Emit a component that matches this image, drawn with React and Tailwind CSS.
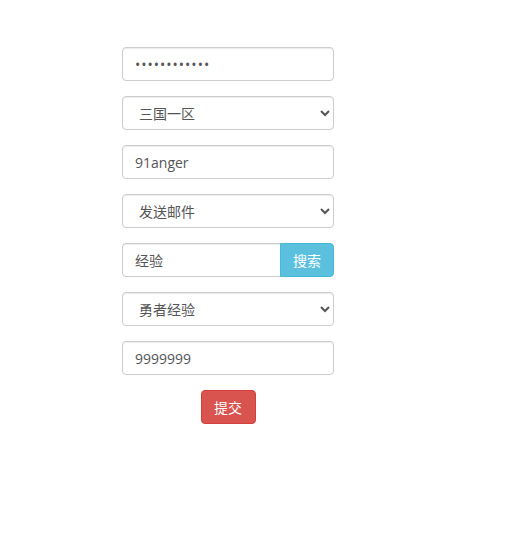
import React from "react";

const fontCls = "font-['Open_Sans','Noto_Sans_CJK_SC',sans-serif]";

const inputCls =
  "block w-[212px] h-[34px] px-[12px] py-[6px] text-[14px] text-[#555] bg-white border border-[#ccc] rounded-[4px] shadow-[inset_0_1px_1px_rgba(0,0,0,0.075)] outline-none " +
  fontCls;

function Sel({ value }) {
  return (
    <select defaultValue={value} className={inputCls}>
      <option value={value}>{value}</option>
    </select>
  );
}

export default function App() {
  return (
    <div className={"w-[518px] h-[550px] bg-white pt-[47px] pl-[122px] " + fontCls}>
      <div className="flex flex-col gap-[15px] w-[212px]">
        <input
          type="password"
          defaultValue="************"
          className={inputCls + " tracking-[1px] text-[#5a4a42]"}
        />
        <Sel value="三国一区" />
        <input type="text" defaultValue="91anger" className={inputCls} />
        <Sel value="发送邮件" />
        <div className="flex w-[212px]">
          <input
            type="text"
            defaultValue="经验"
            className={
              "block w-[159px] h-[34px] px-[12px] py-[6px] text-[14px] text-[#555] bg-white border border-[#ccc] rounded-l-[4px] shadow-[inset_0_1px_1px_rgba(0,0,0,0.075)] outline-none " +
              fontCls
            }
          />
          <button
            className={
              "h-[34px] w-[54px] -ml-px bg-[#5bc0de] border border-[#46b8da] text-white text-[14px] rounded-r-[4px] flex items-center justify-center " +
              fontCls
            }
          >
            搜索
          </button>
        </div>
        <Sel value="勇者经验" />
        <input type="text" defaultValue="9999999" className={inputCls} />
        <div className="flex justify-center">
          <button
            className={
              "h-[34px] w-[55px] bg-[#d9534f] border border-[#d43f3a] text-white text-[14px] rounded-[4px] flex items-center justify-center " +
              fontCls
            }
          >
            提交
          </button>
        </div>
      </div>
    </div>
  );
}
